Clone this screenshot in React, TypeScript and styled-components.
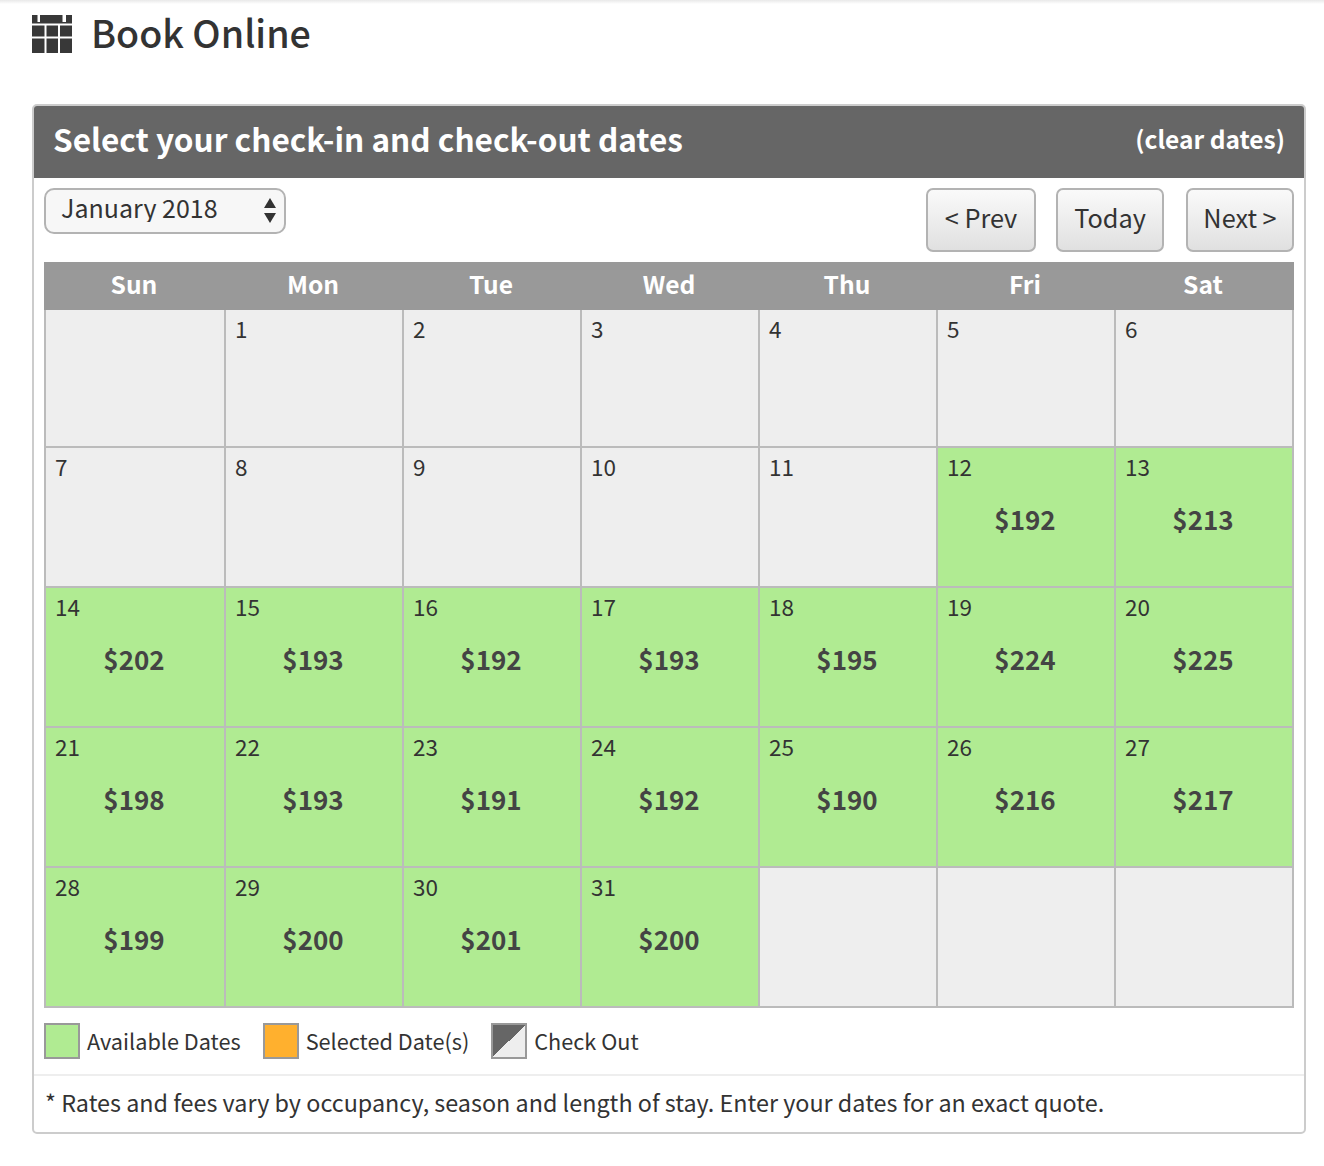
import React from 'react';
import styled, { createGlobalStyle } from 'styled-components';

const GlobalStyle = createGlobalStyle`
  html, body {
    margin: 0;
    padding: 0;
    background: #ffffff;
  }
  body {
    font-family: "Noto Sans CJK SC", "Source Sans Pro", "Open Sans", sans-serif;
    color: #333333;
  }
  * {
    box-sizing: border-box;
  }
`;

const Page = styled.div`
  width: 1324px;
  height: 1166px;
  padding: 0 18px 0 32px;
  overflow: hidden;
  background: linear-gradient(#e9e9e9, #ffffff 4px);
`;

const PageTitle = styled.div`
  display: flex;
  align-items: center;
  gap: 19px;
  height: 104px;
  padding-bottom: 36px;
`;

const TitleText = styled.h1`
  margin: 0 0 4px;
  font-size: 37.6px;
  line-height: 50px;
  font-weight: 500;
  color: #333333;
`;

const Panel = styled.div`
  height: 1030px;
  border: 2px solid #cccccc;
  border-radius: 5px;
  overflow: hidden;
`;

const PanelHeader = styled.div`
  display: flex;
  justify-content: space-between;
  align-items: center;
  height: 72px;
  padding: 0 19px 8px 19px;
  background: #666666;
  color: #ffffff;
  font-weight: 700;
`;

const PanelTitle = styled.span`
  font-size: 31.55px;
  line-height: 44px;
`;

const ClearDates = styled.a`
  margin-top: 2px;
  font-size: 24.5px;
  line-height: 36px;
  color: #ffffff;
`;

const Toolbar = styled.div`
  display: flex;
  justify-content: space-between;
  align-items: flex-start;
  height: 84px;
  padding: 10px 10px 0;
`;

const SelectWrap = styled.div`
  position: relative;
  width: 242px;
  height: 46px;
`;

const MonthSelect = styled.select`
  appearance: none;
  width: 100%;
  height: 100%;
  padding: 0 0 9px 15px;
  border: 2px solid #b3b3b3;
  border-radius: 10px;
  background: #f7f7f7;
  color: #333333;
  font: 400 25px/30px "Noto Sans CJK SC", sans-serif;
`;

const SelectArrows = styled.svg`
  position: absolute;
  top: 9px;
  right: 9px;
  pointer-events: none;
`;

const NavButtons = styled.div`
  display: flex;
  gap: 20px;
`;

const NavButton = styled.button<{ $width: number }>`
  width: ${props => props.$width}px;
  height: 64px;
  padding: 0 0 7px;
  border: 2px solid #b3b3b3;
  border-radius: 7px;
  background: linear-gradient(#fafafa, #e0e0e0);
  color: #333333;
  font: 400 25.3px/40px "Noto Sans CJK SC", sans-serif;

  &:last-child {
    margin-left: 2px;
  }
`;

const Calendar = styled.div`
  margin: 0 10px;
  width: 1250px;
`;

const WeekHeader = styled.div`
  display: grid;
  grid-template-columns: 180px repeat(6, 178px);
  height: 48px;
  background: #999999;
`;

const WeekDay = styled.div`
  padding-bottom: 6px;
  text-align: center;
  font-size: 24.6px;
  line-height: 42px;
  font-weight: 700;
  color: #ffffff;
`;

const Grid = styled.div`
  display: grid;
  grid-template-columns: 180px repeat(6, 178px);
  grid-template-rows: 138px repeat(4, 140px);
  border-left: 2px solid #bbbbbb;
`;

const Day = styled.div<{ $available: boolean }>`
  display: flex;
  flex-direction: column;
  padding: 5px 11px 0 9px;
  border-right: 2px solid #bbbbbb;
  border-bottom: 2px solid #bbbbbb;
  background: ${props => (props.$available ? '#b0eb92' : '#eeeeee')};
  color: #333333;
`;

const DayNumber = styled.span`
  font-size: 22.5px;
  line-height: 26px;
`;

const Price = styled.span`
  margin-top: 20px;
  text-align: center;
  font-size: 26px;
  line-height: 40px;
  font-weight: 700;
  color: #444444;
`;

const Legend = styled.div`
  display: flex;
  align-items: center;
  height: 66px;
  margin: 0 10px;
`;

const LegendItem = styled.div`
  display: flex;
  align-items: center;
  gap: 7px;
  margin-right: 22px;
  font-size: 21.7px;
  line-height: 36px;
`;

const LegendLabel = styled.span`
  padding-bottom: 1px;
`;

const Swatch = styled.span<{ $background: string }>`
  display: block;
  width: 36px;
  height: 36px;
  border: 2px solid #999999;
  background: ${props => props.$background};
`;

const Note = styled.div`
  padding: 8px 11px 0;
  height: 58px;
  border-top: 2px solid #eeeeee;
  font-size: 23.35px;
  line-height: 36px;
`;

const CalendarIcon = () => (
  <svg width="40" height="38" viewBox="0 0 40 38" fill="#383838">
    <path d="M0 0h5.5v7H8V0h22.5v7H34V0h6v8.5H0z" />
    <rect x="0" y="10.5" width="12.5" height="11" />
    <rect x="14.5" y="10.5" width="11.5" height="11" />
    <rect x="28" y="10.5" width="12" height="11" />
    <rect x="0" y="23.5" width="12.5" height="14.5" />
    <rect x="14.5" y="23.5" width="11.5" height="14.5" />
    <rect x="28" y="23.5" width="12" height="14.5" />
  </svg>
);

const weekDays = ['Sun', 'Mon', 'Tue', 'Wed', 'Thu', 'Fri', 'Sat'];

const prices: Record<number, number> = {
  12: 192, 13: 213, 14: 202, 15: 193, 16: 192, 17: 193, 18: 195, 19: 224, 20: 225,
  21: 198, 22: 193, 23: 191, 24: 192, 25: 190, 26: 216, 27: 217, 28: 199, 29: 200,
  30: 201, 31: 200,
};

// January 2018 starts on a Monday, so one blank cell first and three at the end
const cells: (number | null)[] = [
  null,
  ...Array.from({ length: 31 }, (_, i) => i + 1),
  null,
  null,
  null,
];

const App: React.FC = () => {
  return (
    <Page>
      <GlobalStyle />
      <PageTitle>
        <CalendarIcon />
        <TitleText>Book Online</TitleText>
      </PageTitle>
      <Panel>
        <PanelHeader>
          <PanelTitle>Select your check-in and check-out dates</PanelTitle>
          <ClearDates>(clear dates)</ClearDates>
        </PanelHeader>
        <Toolbar>
          <SelectWrap>
            <MonthSelect defaultValue="2018-01">
              <option value="2018-01">January 2018</option>
            </MonthSelect>
            <SelectArrows width="14" height="28" viewBox="0 0 14 28" fill="#333333">
              <path d="M7 1l6 10H1z" />
              <path d="M7 26l6-10H1z" />
            </SelectArrows>
          </SelectWrap>
          <NavButtons>
            <NavButton $width={110}>&lt; Prev</NavButton>
            <NavButton $width={108}>Today</NavButton>
            <NavButton $width={108}>Next &gt;</NavButton>
          </NavButtons>
        </Toolbar>
        <Calendar>
          <WeekHeader>
            {weekDays.map(day => (
              <WeekDay key={day}>{day}</WeekDay>
            ))}
          </WeekHeader>
          <Grid>
            {cells.map((day, index) => {
              const price = day ? prices[day] : undefined;
              return (
                <Day key={index} $available={Boolean(price)}>
                  {day && <DayNumber>{day}</DayNumber>}
                  {price && <Price>${price}</Price>}
                </Day>
              );
            })}
          </Grid>
        </Calendar>
        <Legend>
          <LegendItem>
            <Swatch $background="#b0eb92" />
            <LegendLabel>Available Dates</LegendLabel>
          </LegendItem>
          <LegendItem>
            <Swatch $background="#ffb02e" />
            <LegendLabel>Selected Date(s)</LegendLabel>
          </LegendItem>
          <LegendItem>
            <Swatch $background="linear-gradient(to bottom right, #666666 50%, #eeeeee 50%)" />
            <LegendLabel>Check Out</LegendLabel>
          </LegendItem>
        </Legend>
        <Note>* Rates and fees vary by occupancy, season and length of stay. Enter your dates for an exact quote.</Note>
      </Panel>
    </Page>
  );
};

export default App;
